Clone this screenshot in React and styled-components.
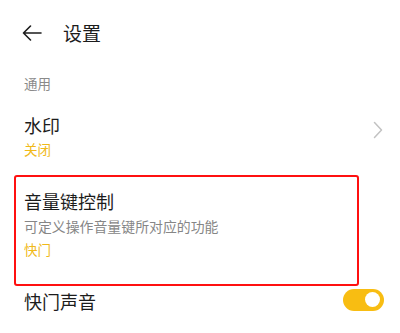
import styled, { createGlobalStyle } from "styled-components";

const Global = createGlobalStyle`
    body {
        margin: 0;
        background: #ffffff;
        font-family: "Noto Sans CJK SC", "Noto Sans", sans-serif;
    }
`;

const Page = styled.div`
    width: 400px;
    height: 333px;
    overflow: hidden;
    padding: 0 16px 0 24px;
    box-sizing: border-box;
`;

const Header = styled.div`
    height: 66px;
    display: flex;
    align-items: center;
    margin-left: -2px;
`;

const Title = styled.h1`
    margin: 0 0 0 21px;
    font-size: 19px;
    font-weight: 400;
    line-height: 24px;
    color: #1c1c1c;
`;

const SectionLabel = styled.div`
    margin-top: 8px;
    font-size: 13.5px;
    line-height: 18px;
    color: #8a8a8a;
`;

const Item = styled.div`
    display: flex;
    align-items: center;
    justify-content: space-between;
    padding: ${(p) => p.$pad || "0"};
    ${(p) =>
        p.$highlight &&
        `
        width: 345px;
        box-sizing: border-box;
        margin-left: -10px;
        padding-left: 8px;
        border: 2px solid #ff1010;
        border-radius: 3px;
    `}
`;

const Texts = styled.div`
    display: flex;
    flex-direction: column;
`;

const ItemTitle = styled.div`
    font-size: 18px;
    line-height: 24px;
    color: #1c1c1c;
`;

const Desc = styled.div`
    margin-top: 4px;
    font-size: 13.9px;
    line-height: 18px;
    color: #868686;
`;

const Value = styled.div`
    margin-top: ${(p) => p.$gap || "3px"};
    font-size: 13.5px;
    line-height: 18px;
    color: #f0b919;
`;

const Toggle = styled.div`
    width: 41px;
    height: 22px;
    border-radius: 11px;
    background: #f8bd12;
    display: flex;
    align-items: center;
    justify-content: flex-end;
    padding-right: 4px;
    box-sizing: border-box;
    margin-top: -3px;
`;

const Knob = styled.div`
    width: 15px;
    height: 15px;
    border-radius: 50%;
    background: #ffffff;
`;

const BackArrow = () => (
    <svg width="20" height="16" viewBox="0 0 20 16" fill="none">
        <path d="M19 8H1.5M8.5 1L1.5 8l7 7" stroke="#1c1c1c" strokeWidth="1.6" strokeLinecap="round" strokeLinejoin="round" />
    </svg>
);

const Chevron = () => (
    <svg width="10" height="18" viewBox="0 0 10 18" fill="none" style={{ marginRight: "1px", marginTop: "-12px" }}>
        <path d="M1.5 1.5L8.5 9l-7 7.5" stroke="#c2c2c2" strokeWidth="1.5" strokeLinecap="round" strokeLinejoin="round" />
    </svg>
);

const App = () => {
    return (
        <Page>
            <Global />
            <Header>
                <BackArrow />
                <Title>设置</Title>
            </Header>
            <SectionLabel>通用</SectionLabel>
            <Item $pad="21px 0 17px">
                <Texts>
                    <ItemTitle>水印</ItemTitle>
                    <Value>关闭</Value>
                </Texts>
                <Chevron />
            </Item>
            <Item $highlight $pad="12px 0 26px 8px">
                <Texts>
                    <ItemTitle>音量键控制</ItemTitle>
                    <Desc>可定义操作音量键所对应的功能</Desc>
                    <Value $gap="5px">快门</Value>
                </Texts>
            </Item>
            <Item $pad="3px 0 0">
                <ItemTitle>快门声音</ItemTitle>
                <Toggle>
                    <Knob />
                </Toggle>
            </Item>
        </Page>
    );
};

export default App;
